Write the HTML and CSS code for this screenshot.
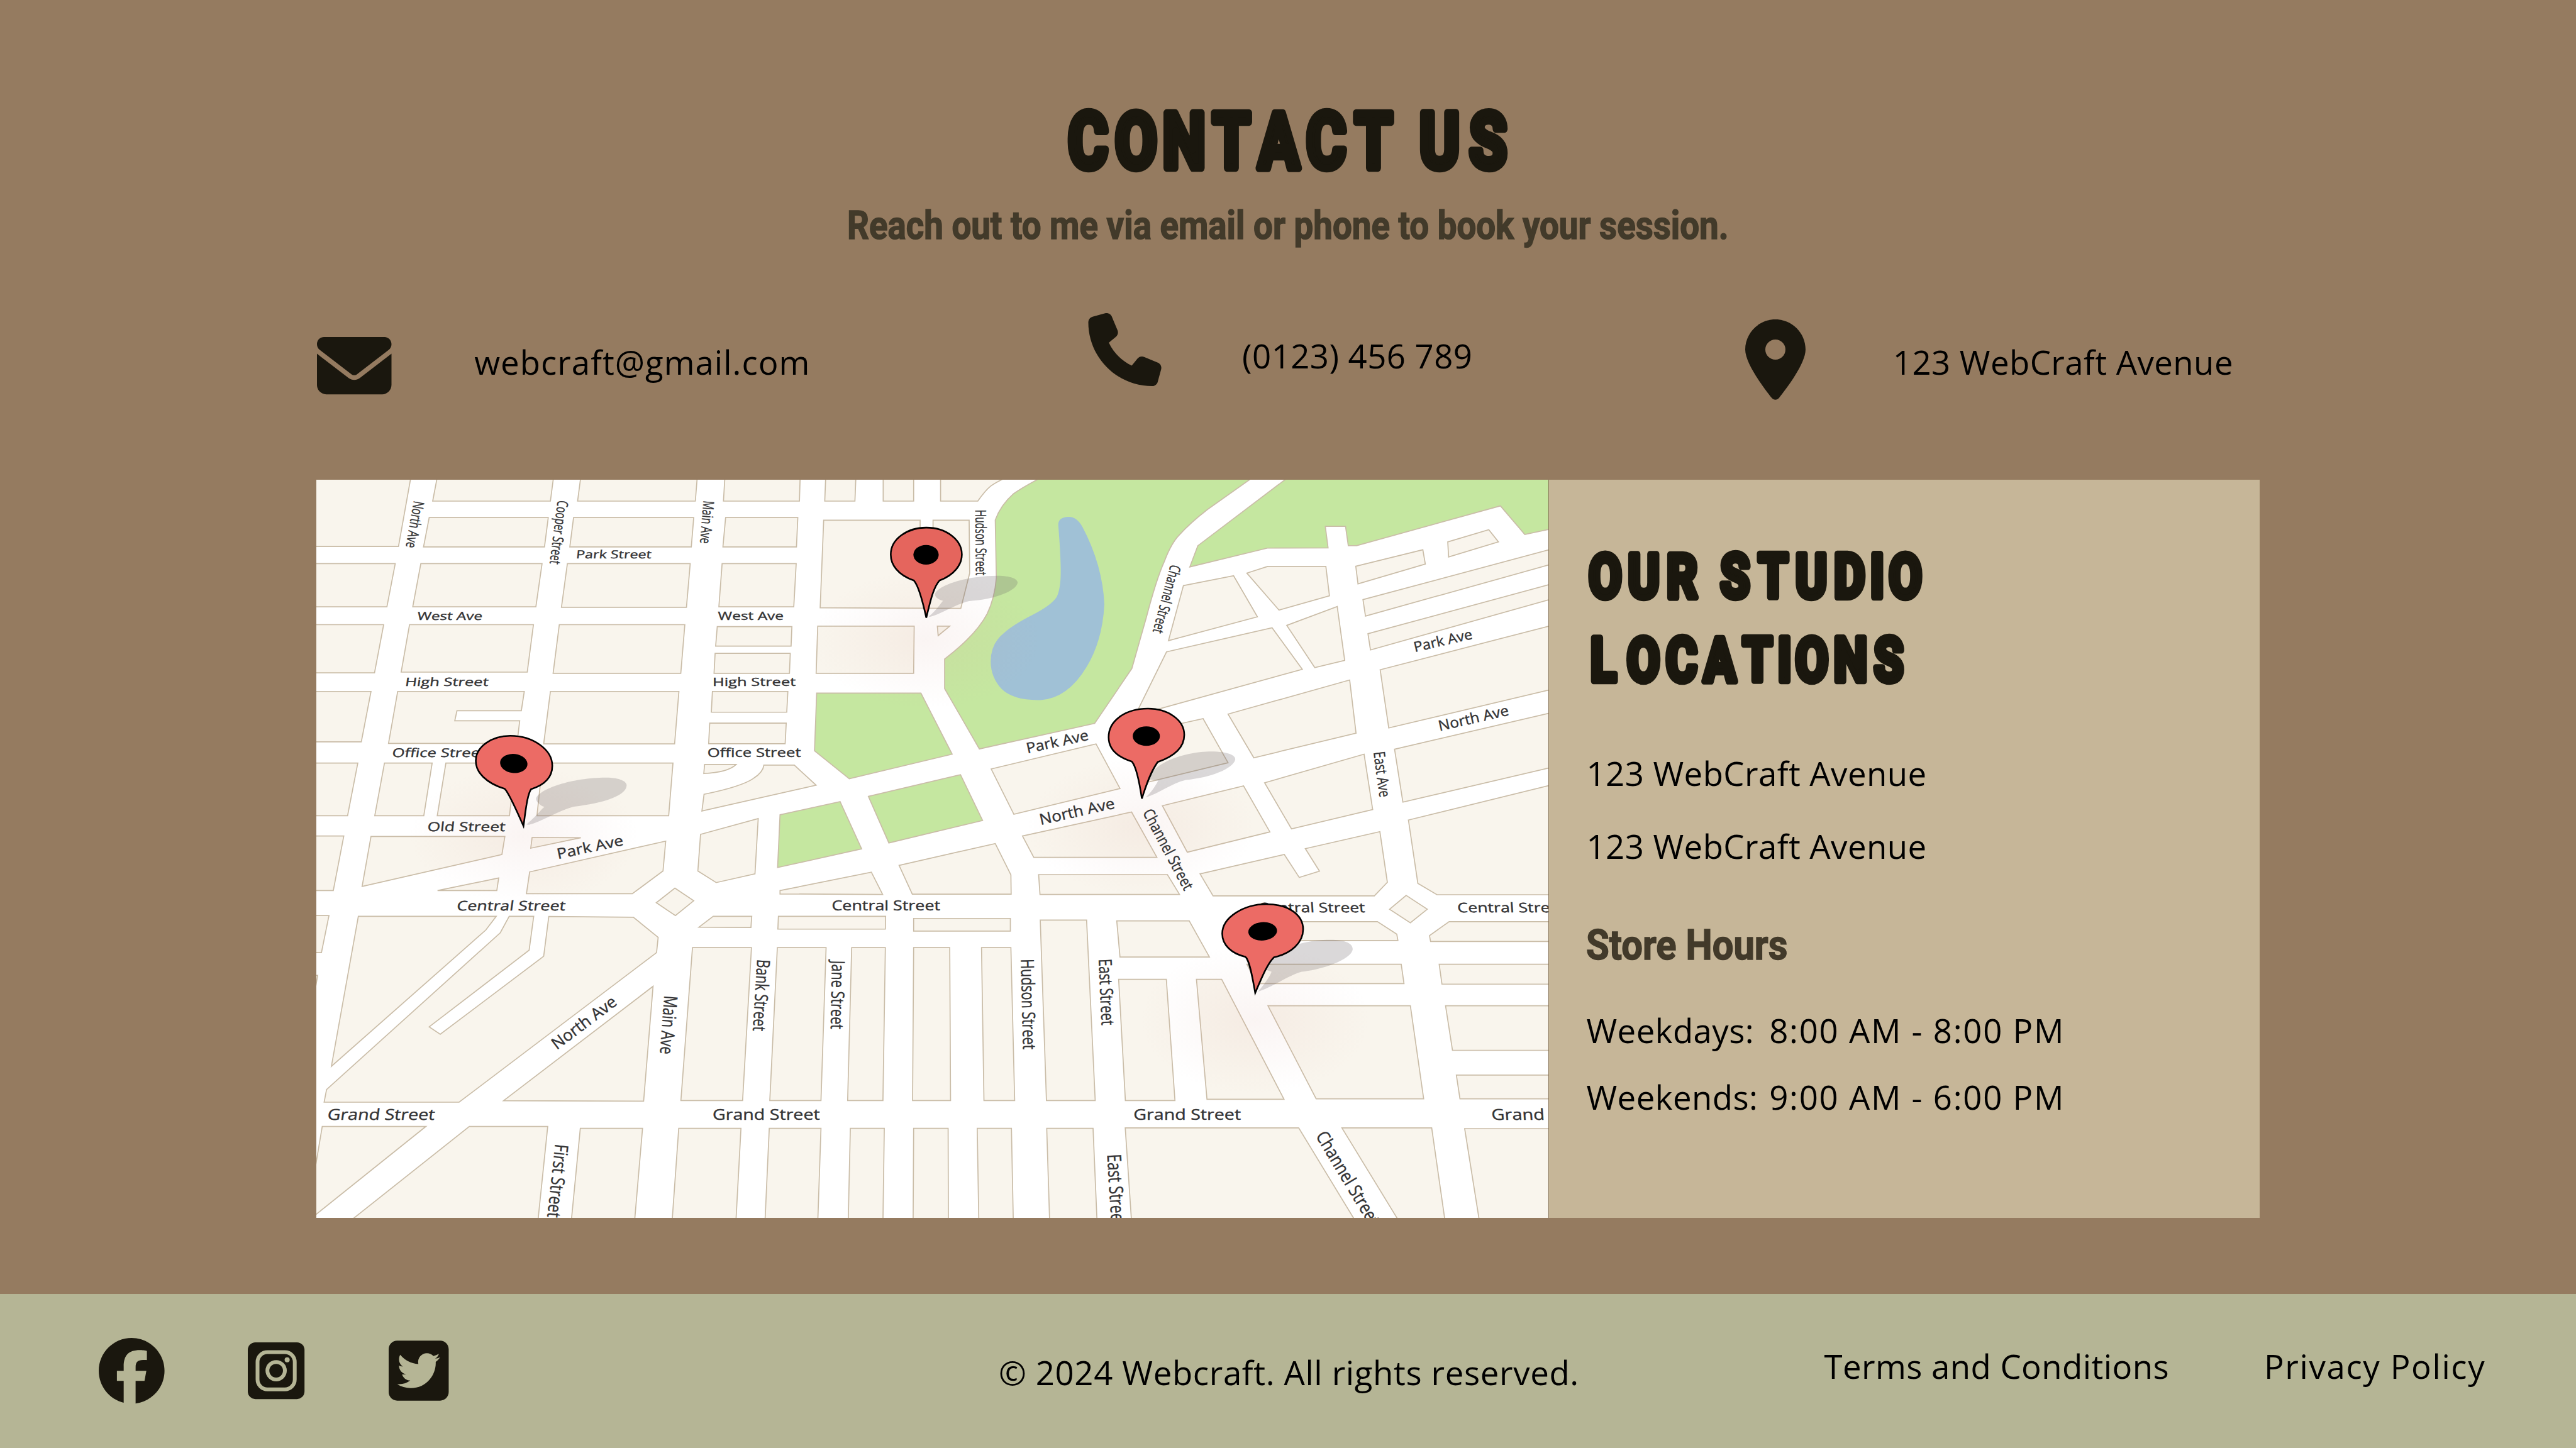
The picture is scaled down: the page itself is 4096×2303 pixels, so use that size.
FILE: index.html
```html
<!DOCTYPE html>
<html lang="en">
<head>
<meta charset="utf-8">
<title>Contact Us - Webcraft</title>
<link rel="stylesheet" href="styles.css">
</head>
<body>
<main class="hero">
  <h1 class="title">
    <svg viewBox="0 0 770 125"><text class="display" transform="scale(.79 1)" y="108" x="67.1 168 268.6 368.1 467.6 567.1 666.5 735 804.7 906.7">CONTACT US</text></svg>
  </h1>
  <p class="subtitle">
    <svg viewBox="0 0 1470 80"><text class="condensed sub-text" x="3" y="56" textLength="1461" lengthAdjust="spacingAndGlyphs">Reach out to me via email or phone to book your session.</text></svg>
  </p>

  <ul class="contacts">
    <li class="contact contact-email">
      <svg class="icon" viewBox="0 64 512 384" preserveAspectRatio="none"><path d="M48 64C21.5 64 0 85.5 0 112c0 15.1 7.1 29.3 19.2 38.4L236.8 313.6c11.4 8.5 27 8.5 38.4 0L492.8 150.4c12.1-9.1 19.2-23.3 19.2-38.4c0-26.5-21.5-48-48-48H48zM0 176V384c0 35.3 28.7 64 64 64H448c35.3 0 64-28.7 64-64V176L294.4 339.2c-22.8 17.1-54 17.1-76.8 0L0 176z"/></svg>
      <span>webcraft@gmail.com</span>
    </li>
    <li class="contact contact-phone">
      <svg class="icon" viewBox="0 0 512 512"><path d="M164.9 24.6c-7.7-18.6-28-28.5-47.4-23.2l-88 24C12.1 30.2 0 46 0 64C0 311.4 200.6 512 448 512c18 0 33.8-12.1 38.6-29.5l24-88c5.3-19.4-4.6-39.7-23.2-47.4l-96-40c-16.3-6.8-35.2-2.1-46.3 11.6L304.7 368C234.3 334.7 177.3 277.7 144 207.3L193.3 167c13.7-11.2 18.4-30 11.6-46.3l-40-96z"/></svg>
      <span>(0123) 456 789</span>
    </li>
    <li class="contact contact-place">
      <svg class="icon" viewBox="0 0 384 512"><path d="M215.7 499.2C267 435 384 279.4 384 192C384 86 298 0 192 0S0 86 0 192c0 87.4 117 243 168.3 307.2c12.3 15.3 35.1 15.3 47.4 0zM192 128a64 64 0 1 1 0 128 64 64 0 1 1 0-128z"/></svg>
      <span>123 WebCraft Avenue</span>
    </li>
  </ul>

  <section class="panel">
    <svg class="map" viewBox="524.5 795.3 2042 1224" preserveAspectRatio="none">
      <defs>
        <radialGradient id="glow"><stop offset="0" stop-color="#d9a79b" stop-opacity=".12"/><stop offset="1" stop-color="#d9a79b" stop-opacity="0"/></radialGradient>
      </defs>
      <!-- north-west -->
      <g class="blocks" transform="translate(520 790) scale(.446429 .395408)">
        <path d="M-10-10H363L315 293H-10ZM461-10H892L879 103H442ZM429 172H871L857 295H408ZM993-10H1425L1417 103H980ZM965 172H1411L1402 295H951Z"/>
        <path d="M-10 365H303L272 546H-10ZM398 365H848L825 546H368ZM942 365H1398L1384 548H920ZM-10 621H260L226 823H-10ZM356 621H816L793 820H325ZM912 621H1378L1363 825H889Z"/>
        <path d="M-10 901H213L177 1112H-10ZM312 901H782L771 982H532L524 1024H765L755 1119H278ZM879 901H1356L1340 1121H854Z"/>
        <path d="M-10 1201H164L126 1422H-10ZM263 1201H440L409 1422H227ZM491 1201H750L727 1422H459ZM850 1201H1334L1318 1422H829Z"/>
      </g>
      <!-- north -->
      <g class="blocks" transform="translate(1180 790) scale(.446429 .395408)">
        <path d="M49-10H328L325 103H43ZM423-10H535L531 103H419ZM636-10H749V103H636ZM849-10V103H987Q1015 58 1035 40Q1060 20 1110-5ZM51 172H319L314 295H41ZM38 365H313L304 546H26Z"/>
        <path d="M415 183H773V240H821V183H955L957 405L924 553L402 550ZM20 629H297L294 711H14ZM12 741H291L288 825H8ZM393 627H751L749 825H387ZM837 627H883L840 667Z"/>
        <path d="M2 901H282L278 988H-2ZM-8 1034H276L272 1120H-12ZM-27 1207H90Q60 1240-30 1245ZM-29 1332Q110 1300 155 1265Q190 1240 193 1210H306L387 1294L-37 1402ZM1037 1226L1426 1121L1515 1308L1121 1416Z"/>
        <path class="park" d="M389 908H776L892 1164L510 1267L381 1150ZM581 1341L923 1250L1005 1442L657 1536ZM253 1418L476 1363L556 1561L244 1639Z"/>
        <path class="park" d="M1250-12Q1160 40 1120 72Q1072 120 1052 182L1056 425Q1050 510 1022 575Q980 665 864 765V889L993 1142L1421 1035L1559 805L1613 590Q1650 430 1680 355Q1705 280 1735 245Q1775 195 1840 138L2025-10Z"/>
        <path class="lake" d="M1286 205Q1284 170 1325 169Q1355 170 1375 210Q1450 370 1457 535Q1450 690 1390 800Q1320 930 1220 937Q1120 940 1075 890Q1035 840 1035 775Q1035 700 1085 655Q1120 620 1190 580Q1260 540 1280 505Q1295 470 1295 400Q1295 330 1286 205Z"/>
      </g>
      <!-- north-east -->
      <g class="blocks" transform="translate(1860 790) scale(.459184 .395408)">
        <path class="park" d="M614-10L273 290L244 379L524 300L743 299L733 209H806L816 290H846L1365 123L1453 243L1550 219V-10Z"/>
        <path d="M221 457L402 416L488 588L167 688ZM450 405L525 377H735L748 500L566 560ZM160 735L541 634L650 808L130 975H58ZM594 624L776 545L803 771L695 801Z"/>
        <path d="M843 376L1085 307L1094 367L851 450ZM1175 274L1323 223L1358 274L1178 337ZM869 516L1550 304V367L878 585ZM887 659L1550 450V513L896 727ZM931 810L1550 624V892L962 1054ZM983 1143L1550 990V1219L1013 1365Z"/>
        <path d="M382 996L821 853L844 1076L475 1179ZM514 1284L873 1164L904 1396L611 1477ZM20 1085L292 1015L382 1200L90 1282ZM145 1380L438 1297L533 1490L235 1575Z"/>
      </g>
      <!-- south-west -->
      <g class="blocks" transform="translate(520 1400) scale(.446429 .401786)">
        <path d="M-10-35H112L73 190H-10ZM213-33H710L699 41L180 173ZM811-29L992-28L806 15ZM460 190L687 138L680 190ZM802 113L1307-14L1297 109L1183 203H790ZM1341 180L1411 232L1343 293L1272 240Z"/>
        <path d="M-10 293H57L29 446H-10ZM15 540L-10 700V540ZM166 296H678L639 353L66 915ZM726 296H817L800 436L429 752L470 783L854 461L873 297L1187 300L1279 383L1273 446L540 1063H39L48 1011L693 364ZM1260 585L1225 1059L705 1057Z"/>
        <path d="M32 1163H417L-10 1543V1440ZM578 1163H869L832 1560H128ZM990 1171H1221L1191 1560H956Z"/>
      </g>
      <!-- south -->
      <g class="blocks" transform="translate(1180 1400) scale(.446429 .401786)">
        <path d="M-42-42L172-107L160 121L16 157L-52 109ZM1153-35L1558-134L1652 53H1195ZM695 86L1052-4L1110 125L1111 205H744ZM253 190L592 114L634 206L253 204ZM1213 124H1691L1736 206H1218Z"/>
        <path d="M-48 341L5 296H148L145 342ZM247 296H645L644 349H245ZM749 305H1108V357H749ZM-72 425H147L114 1056H-115ZM243 425H424L405 1056H215ZM519 425H644L635 1056H504ZM749 425H883L886 1056H745ZM1001 425H1110L1124 1056H1010ZM1219 312H1391L1423 1056H1242ZM1503 315H1772L1847 464H1515ZM1510 556H1687L1719 1056H1535Z"/>
        <path d="M-123 1171H108L89 1560H-148ZM213 1171H405L393 1560H197ZM514 1171H640L635 1560H506ZM749 1171H877L878 1560H747ZM985 1171H1112L1119 1560H991ZM1243 1171H1415L1430 1560H1254Z"/>
      </g>
      <!-- south-east -->
      <g class="blocks" transform="translate(1860 1400) scale(.459184 .401786)">
        <path d="M281 121L585 41L639 136L712 110L661 17L930-53L957 156L910 212H328ZM1033-101L1550-246V207H1136L1067 160ZM1025 210L1101 267L1040 323L965 267ZM380 318H921L991 370L995 396H400ZM1180 318H1550V400H1113L1109 376Z"/>
        <path d="M450 494H1007L1017 574H486ZM1144 494H1550V576H1154ZM526 665H1040L1088 1049H700ZM1167 665H1550V849H1192ZM1206 951H1550V1049H1219ZM268 556H359L584 1051H306Z"/>
        <path d="M11 1169H637L845 1560H34ZM793 1169H1117L1166 1560H1002ZM1236 1172H1550V1560H1290Z"/>
      </g>

      <g fill="url(#glow)">
        <ellipse cx="868" cy="1385" rx="190" ry="115"/><ellipse cx="1535" cy="1060" rx="190" ry="115"/>
        <ellipse cx="1892" cy="1370" rx="190" ry="115"/><ellipse cx="2080" cy="1690" rx="190" ry="125"/>
      </g>

      <g class="labels">
        <text transform="translate(954.4 925.2) skewX(-6)" font-size="18.5" textLength="125" lengthAdjust="spacingAndGlyphs">Park Street</text>
        <text transform="translate(691 1027.5) skewX(-8)" font-size="18.5" textLength="108" lengthAdjust="spacingAndGlyphs">West Ave</text>
        <text transform="translate(1190 1027.5)" font-size="18.5" textLength="109" lengthAdjust="spacingAndGlyphs">West Ave</text>
        <text transform="translate(671 1137) skewX(-8)" font-size="19" textLength="138" lengthAdjust="spacingAndGlyphs">High Street</text>
        <text transform="translate(1181 1137)" font-size="19" textLength="138" lengthAdjust="spacingAndGlyphs">High Street</text>
        <text transform="translate(649.4 1254.5) skewX(-8)" font-size="20" textLength="155" lengthAdjust="spacingAndGlyphs">Office Street</text>
        <text transform="translate(1172.6 1254.5)" font-size="20" textLength="155" lengthAdjust="spacingAndGlyphs">Office Street</text>
        <text transform="translate(708 1378) skewX(-6)" font-size="21" textLength="129" lengthAdjust="spacingAndGlyphs">Old Street</text>
        <text transform="translate(756.5 1509) skewX(-8)" font-size="22" textLength="180" lengthAdjust="spacingAndGlyphs">Central Street</text>
        <text transform="translate(1378.5 1509)" font-size="22" textLength="180" lengthAdjust="spacingAndGlyphs">Central Street</text>
        <text transform="translate(2086 1512) skewX(4)" font-size="22" textLength="177" lengthAdjust="spacingAndGlyphs">Central Street</text>
        <text transform="translate(2416 1512) skewX(4)" font-size="22" textLength="179" lengthAdjust="spacingAndGlyphs">Central Street</text>
        <text transform="translate(542 1856.8) skewX(-8)" font-size="25" textLength="178" lengthAdjust="spacingAndGlyphs">Grand Street</text>
        <text transform="translate(1181 1856.8)" font-size="25" textLength="178" lengthAdjust="spacingAndGlyphs">Grand Street</text>
        <text transform="translate(1878.7 1856.8)" font-size="25" textLength="178" lengthAdjust="spacingAndGlyphs">Grand Street</text>
        <text transform="translate(2472.5 1856.8) skewX(4)" font-size="25" textLength="88" lengthAdjust="spacingAndGlyphs">Grand</text>

        <text transform="translate(686 829.7) rotate(99.9)" font-size="25" textLength="78" lengthAdjust="spacingAndGlyphs">North Ave</text>
        <text transform="translate(924.5 829) rotate(97.2)" font-size="25" textLength="106" lengthAdjust="spacingAndGlyphs">Cooper Street</text>
        <text transform="translate(1166 829.7) rotate(94.5)" font-size="25" textLength="71" lengthAdjust="spacingAndGlyphs">Main Ave</text>
        <text transform="translate(1616.6 845) rotate(89.5)" font-size="25" textLength="109" lengthAdjust="spacingAndGlyphs">Hudson Street</text>
        <text transform="translate(1940.5 935) rotate(105)" font-size="25" textLength="116" lengthAdjust="spacingAndGlyphs">Channel Street</text>
        <text transform="translate(1893.5 1347) rotate(62)" font-size="26" textLength="148" lengthAdjust="spacingAndGlyphs">Channel Street</text>
        <text transform="translate(2276.5 1247) rotate(82.5)" font-size="26" textLength="76" lengthAdjust="spacingAndGlyphs">East Ave</text>
        <text transform="translate(1703 1249) rotate(-12.5)" font-size="24" textLength="105" lengthAdjust="spacingAndGlyphs">Park Ave</text>
        <text transform="translate(1725 1367.5) rotate(-12.7)" font-size="25" textLength="127" lengthAdjust="spacingAndGlyphs">North Ave</text>
        <text transform="translate(2345 1081) rotate(-13)" font-size="23" textLength="99" lengthAdjust="spacingAndGlyphs">Park Ave</text>
        <text transform="translate(2386 1212) rotate(-13)" font-size="24" textLength="119" lengthAdjust="spacingAndGlyphs">North Ave</text>
        <text transform="translate(925 1424) rotate(-12)" font-size="24" textLength="112" lengthAdjust="spacingAndGlyphs">Park Ave</text>
        <text transform="translate(923 1741) rotate(-37)" font-size="27" textLength="127" lengthAdjust="spacingAndGlyphs">North Ave</text>
        <text transform="translate(1101 1650) rotate(94.2)" font-size="31" textLength="97" lengthAdjust="spacingAndGlyphs">Main Ave</text>
        <text transform="translate(920.4 1896) rotate(96.2)" font-size="31" textLength="122" lengthAdjust="spacingAndGlyphs">First Street</text>
        <text transform="translate(1255 1590) rotate(93.4)" font-size="30" textLength="119" lengthAdjust="spacingAndGlyphs">Bank Street</text>
        <text transform="translate(1379 1592) rotate(91)" font-size="30" textLength="114" lengthAdjust="spacingAndGlyphs">Jane Street</text>
        <text transform="translate(1692 1590) rotate(88.6)" font-size="30" textLength="150" lengthAdjust="spacingAndGlyphs">Hudson Street</text>
        <text transform="translate(1821 1590) rotate(87.5)" font-size="30" textLength="110" lengthAdjust="spacingAndGlyphs">East Street</text>
        <text transform="translate(1835 1914) rotate(86.5)" font-size="32" textLength="120" lengthAdjust="spacingAndGlyphs">East Street</text>
        <text transform="translate(2180 1883) rotate(59)" font-size="30" textLength="176" lengthAdjust="spacingAndGlyphs">Channel Street</text>
      </g>

      <g class="pin" transform="translate(520 790) scale(.446429 .395408)">
        <path class="shade" d="M790 1459C830 1420 850 1390 857 1385C840 1380 824 1360 826 1350C835 1310 960 1262 1085 1262C1140 1262 1163 1280 1162 1295C1160 1340 1070 1370 965 1384C910 1400 850 1445 800 1460Z"/>
        <path class="body" d="M709 1309C640 1285 602 1240 602 1192C602 1132 662 1087 730 1087C815 1087 886 1145 886 1213C886 1260 860 1292 807 1311C793 1335 787 1400 779 1465C755 1405 725 1325 709 1309Z"/>
        <ellipse cx="743" cy="1203" rx="51" ry="40" transform="rotate(8 743 1203)"/>
      </g>
      <g class="pin" transform="translate(1180 790) scale(.446429 .395408)">
        <path class="shade" d="M805 587C835 560 850 530 858 521C840 516 827 505 828 492C840 455 945 416 1060 416C1110 416 1136 430 1135 445C1130 480 1050 515 955 522C905 535 850 578 810 588Z"/>
        <path class="body body-dim" d="M750 436C690 412 664 370 664 327C664 262 725 214 796 214C870 214 928 265 928 327C928 370 900 412 845 436C825 460 813 510 796 592C780 510 765 455 750 436Z"/>
        <ellipse cx="795" cy="328" rx="47" ry="41"/>
      </g>
      <g class="pin" transform="translate(1860 790) scale(.459184 .395408)">
        <path class="shade" d="M85 1345C112 1315 125 1285 130 1275L100 1270C105 1200 230 1153 320 1153C385 1153 410 1170 408 1187C400 1225 320 1262 230 1272C180 1285 130 1330 85 1345Z"/>
        <path class="body" d="M35 1195C-20 1175-49 1140-49 1093C-49 1020 15 973 93 973C165 973 224 1020 224 1083C224 1135 190 1172 128 1197C105 1235 90 1280 71 1350C62 1280 50 1215 35 1195Z"/>
        <ellipse cx="87" cy="1088" rx="49" ry="41"/>
      </g>
      <g class="pin" transform="translate(1860 1400) scale(.459184 .401786)">
        <path class="shade" d="M490 607C515 575 535 540 539 525L515 515C520 440 650 393 750 393C810 393 832 410 832 432C828 470 740 512 648 525C600 540 540 590 490 607Z"/>
        <path class="body" d="M444 463C395 450 361 415 361 368C361 300 440 246 520 246C600 246 653 290 653 350C653 405 610 450 548 465C525 490 505 545 480 612C472 560 460 475 444 463Z"/>
        <ellipse cx="507" cy="358" rx="52" ry="38" transform="rotate(-6 507 358)"/>
      </g>
    </svg>

    <div class="details">
      <h2 class="locations-title">
        <svg viewBox="0 0 600 250">
          <text class="display display-sm" transform="scale(.79 1)" y="90.7" x="51.9 132.9 213 270 324.2 404.3 484.3 564.4 622.4 681.5">OUR STUDIO</text>
          <text class="display display-sm" transform="scale(.79 1)" y="229" x="48 132 212 292.2 371.3 428.2 485.3 566.5 646.5">LOCATIONS</text>
        </svg>
      </h2>
      <p class="address">123 WebCraft Avenue</p>
      <p class="address">123 WebCraft Avenue</p>
      <h3 class="hours-title">
        <svg viewBox="0 0 360 80"><text class="condensed hours-text" x="0" y="61" textLength="334" lengthAdjust="spacingAndGlyphs">Store Hours</text></svg>
      </h3>
      <dl class="hours">
        <dt>Weekdays:</dt><dd>8:00 AM - 8:00 PM</dd>
        <dt>Weekends:</dt><dd>9:00 AM - 6:00 PM</dd>
      </dl>
    </div>
  </section>
</main>

<footer class="footer">
  <nav class="social">
    <svg class="icon fb" viewBox="0 0 512 512"><path d="M512 256C512 114.6 397.4 0 256 0S0 114.6 0 256C0 376 82.7 476.8 194.2 504.5V334.2H141.4V256h52.8V222.3c0-87.1 39.4-127.5 125-127.5c16.2 0 44.2 3.2 55.7 6.4V172c-6-.6-16.5-1-29.6-1c-42 0-58.2 15.9-58.2 57.2V256h83.6l-14.4 78.2H287V510.1C413.8 494.8 512 386.9 512 256z"/></svg>
    <svg class="icon ig" viewBox="0 0 448 448"><rect width="448" height="448" rx="60"/><g class="cut"><rect x="77" y="77" width="294" height="294" rx="78"/><circle cx="224" cy="224" r="69"/></g><circle class="dot" cx="311" cy="138" r="20"/></svg>
    <svg class="icon tw" viewBox="0 32 448 448"><path d="M64 32C28.7 32 0 60.7 0 96V416c0 35.3 28.7 64 64 64H384c35.3 0 64-28.7 64-64V96c0-35.3-28.7-64-64-64H64zM351.3 199.3v0c0 86.7-66 186.6-186.6 186.6c-37.2 0-71.7-10.8-100.7-29.4c5.3 .6 10.4 .8 15.8 .8c30.7 0 58.9-10.4 81.4-28c-28.8-.6-53-19.5-61.3-45.5c10.1 1.5 19.2 1.5 29.6-1.2c-30-6.1-52.5-32.5-52.5-64.4v-.8c8.7 4.9 18.9 7.9 29.6 8.3c-9-6-16.4-14.1-21.5-23.6s-7.8-20.2-7.7-31c0-12.2 3.2-23.4 8.9-33.1c32.3 39.8 80.8 65.8 135.2 68.6c-9.3-44.5 24-80.6 64-80.6c18.9 0 35.9 7.9 47.9 20.7c14.8-2.8 29-8.3 41.6-15.8c-4.9 15.2-15.2 28-28.8 36.1c13.2-1.4 26-5.1 37.8-10.2c-8.9 13.1-20.1 24.7-32.9 34c.2 2.8 .2 5.7 .2 8.5z"/></svg>
  </nav>
  <p class="copyright">© 2024 Webcraft. All rights reserved.</p>
  <nav class="legal"><span class="terms">Terms and Conditions</span><span class="privacy">Privacy Policy</span></nav>
</footer>
</body>
</html>
```
FILE: styles.css
```css
:root {
  /* one design unit: the page is 4269 units wide */
  --u: calc(100vw / 4269);
  --ink: #1a170e;
  --brown: #957b60;
  --sand: #c6b698;
  --sage: #b5b595;
}
* { box-sizing: border-box; margin: 0; padding: 0; }
html, body { height: 100%; overflow: hidden; }
body {
  display: flex;
  flex-direction: column;
  background: var(--brown);
  color: #000;
  font-family: "Open Sans", "Noto Sans", sans-serif;
  font-size: calc(var(--u) * 55);
  line-height: calc(var(--u) * 72);
  letter-spacing: calc(var(--u) * .45);
  white-space: nowrap;
}
svg { display: block; overflow: visible; }
ul { list-style: none; }
.icon { fill: var(--ink); flex: none; }

.hero { height: calc(var(--u) * 2144.5); padding-top: calc(var(--u) * 170); flex: none; }
.title svg { width: calc(var(--u) * 770); height: calc(var(--u) * 125); margin-left: calc(var(--u) * 1750); }
.subtitle { margin-top: calc(var(--u) * 45); }
.subtitle svg { width: calc(var(--u) * 1470); height: calc(var(--u) * 80); margin-left: calc(var(--u) * 1401); }

.display {
  font-family: Roboto, sans-serif;
  font-weight: 700;
  font-size: 127px;
  letter-spacing: 0;
  text-anchor: middle;
  fill: var(--ink);
  stroke: var(--ink);
  stroke-width: 13px;
  stroke-linejoin: round;
}
.display-sm { font-size: 100px; stroke-width: 11px; }
.condensed { font-family: Roboto, sans-serif; font-weight: 700; letter-spacing: 0; fill: #423a2a; stroke: #423a2a; stroke-width: 1.6px; }
.sub-text { font-size: 65px; }
.hours-text { font-size: 70px; }

.contacts {
  display: grid;
  grid-template-columns: calc(var(--u) * 1277.5) calc(var(--u) * 1089) 1fr;
  height: calc(var(--u) * 375);
  padding: calc(var(--u) * 99) 0 0 calc(var(--u) * 525.5);
}
.contact { display: flex; align-items: flex-start; }
.contact-email .icon { width: calc(var(--u) * 123.5); height: calc(var(--u) * 95); margin-top: calc(var(--u) * 40); }
.contact-email span { margin: calc(var(--u) * 45) 0 0 calc(var(--u) * 137); letter-spacing: calc(var(--u) * 1.05); }
.contact-phone .icon { width: calc(var(--u) * 122); height: calc(var(--u) * 121); }
.contact-phone span { margin: calc(var(--u) * 34.5) 0 0 calc(var(--u) * 133.5); }
.contact-place .icon { width: calc(var(--u) * 100); height: calc(var(--u) * 133.5); margin-top: calc(var(--u) * 11); }
.contact-place span { margin: calc(var(--u) * 45) 0 0 calc(var(--u) * 145); }

.panel {
  display: flex;
  width: calc(var(--u) * 3220);
  height: calc(var(--u) * 1224);
  margin-left: calc(var(--u) * 524.5);
  background: var(--sand);
}
.map { width: calc(var(--u) * 2042); height: 100%; background: #fff; overflow: hidden; flex: none; }
.blocks path { fill: #f9f5ed; stroke: #cabda8; stroke-width: 1.7px; vector-effect: non-scaling-stroke; }
.blocks .park { fill: #c5e7a0; }
.blocks .lake { fill: #a0c1d6; stroke: none; }
.labels { font-family: "Open Sans", "Noto Sans", sans-serif; letter-spacing: 0; fill: #333335; stroke: #333335; stroke-width: .4px; }
.pin .shade { fill: #6b6466; fill-opacity: .25; }
.pin .body { fill: #ec6b65; stroke: #000; stroke-width: 2.6px; vector-effect: non-scaling-stroke; }
.pin .body-dim { fill: #e5655d; }

.details { flex: 1; border-left: 1px solid #8a7659; padding: calc(var(--u) * 104.5) 0 0 calc(var(--u) * 61.5); }
.locations-title svg { width: calc(var(--u) * 600); height: calc(var(--u) * 250); margin-left: calc(var(--u) * -9.5); }
.address { height: calc(var(--u) * 72); margin-top: calc(var(--u) * 49); }
.locations-title + .address { margin-top: calc(var(--u) * 96); }
.hours-title { margin-top: calc(var(--u) * 91); }
.hours-title svg { width: calc(var(--u) * 360); height: calc(var(--u) * 80); }
.hours {
  display: grid;
  grid-template-columns: calc(var(--u) * 303) 1fr;
  row-gap: calc(var(--u) * 38.5);
  margin-top: calc(var(--u) * 62);
}
.hours dd { letter-spacing: calc(var(--u) * 1.8); }

.footer { flex: 1; display: flex; align-items: flex-start; background: var(--sage); }
.social { display: flex; align-items: flex-start; width: calc(var(--u) * 1655); padding: calc(var(--u) * 73.5) 0 0 calc(var(--u) * 163.6); }
.fb { width: calc(var(--u) * 109); height: calc(var(--u) * 109); }
.ig { width: calc(var(--u) * 94); height: calc(var(--u) * 96); margin: calc(var(--u) * 6.3) 0 0 calc(var(--u) * 138.5); }
.ig .cut { fill: none; stroke: var(--sage); stroke-width: 30px; }
.ig .dot { fill: var(--sage); }
.tw { width: calc(var(--u) * 99.5); height: calc(var(--u) * 100); margin: calc(var(--u) * 4) 0 0 calc(var(--u) * 139.5); }
.copyright { width: calc(var(--u) * 1368); padding-top: calc(var(--u) * 94.5); letter-spacing: calc(var(--u) * .65); }
.legal { display: flex; padding-top: calc(var(--u) * 84); }
.terms { width: calc(var(--u) * 729); }
.privacy { letter-spacing: calc(var(--u) * 1.7); }
```
